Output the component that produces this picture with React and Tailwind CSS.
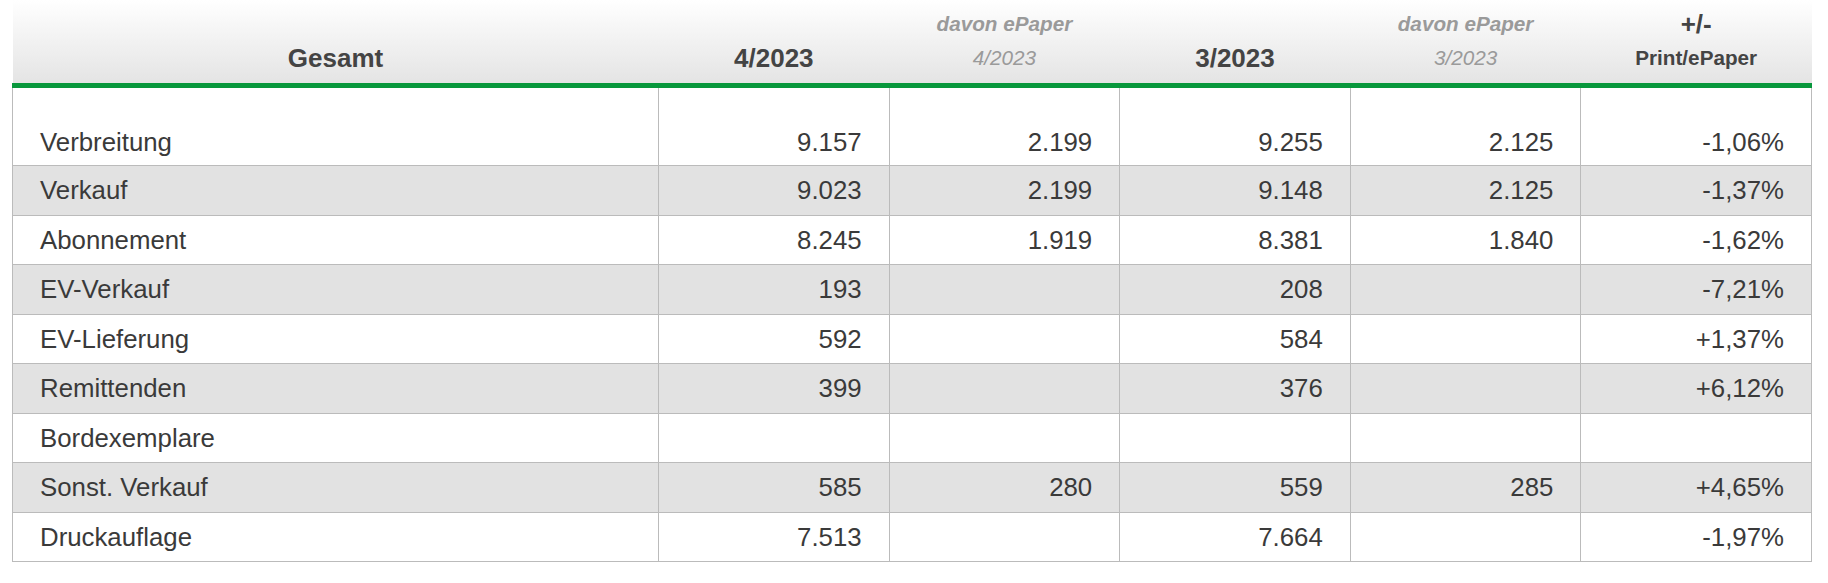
import React from "react";

const rows = [
  ["Verbreitung", "9.157", "2.199", "9.255", "2.125", "-1,06%"],
  ["Verkauf", "9.023", "2.199", "9.148", "2.125", "-1,37%"],
  ["Abonnement", "8.245", "1.919", "8.381", "1.840", "-1,62%"],
  ["EV-Verkauf", "193", "", "208", "", "-7,21%"],
  ["EV-Lieferung", "592", "", "584", "", "+1,37%"],
  ["Remittenden", "399", "", "376", "", "+6,12%"],
  ["Bordexemplare", "", "", "", "", ""],
  ["Sonst. Verkauf", "585", "280", "559", "285", "+4,65%"],
  ["Druckauflage", "7.513", "", "7.664", "", "-1,97%"],
];

function HeadCell({ top, bottom, topClass, bottomClass }) {
  return (
    <th className="p-0 font-normal border-b-[5px] border-[#08973c] bg-gradient-to-b from-white to-[#e4e4e4]">
      <div className="h-[83px] flex flex-col items-center justify-end pb-[12px]">
        {top ? (
          <div className={"leading-[24px] mb-[9px] " + topClass}>{top}</div>
        ) : null}
        <div className={"leading-[26px] " + bottomClass}>{bottom}</div>
      </div>
    </th>
  );
}

export default function App() {
  const bold = "text-[26px] font-bold text-[#444]";
  const grayTop = "text-[20.7px] font-bold italic text-[#9a9a9a]";
  const grayBottom = "text-[20.7px] italic text-[#9a9a9a]";
  return (
    <div className="bg-white w-[1828px] h-[583px] pl-[12px] font-['Liberation_Sans',Arial,sans-serif]">
      <table className="w-[1800px] table-fixed border-collapse">
        <colgroup>
          <col className="w-[646px]" />
          <col />
          <col />
          <col />
          <col />
          <col />
        </colgroup>
        <thead>
          <tr>
            <HeadCell bottom="Gesamt" bottomClass={bold} />
            <HeadCell bottom="4/2023" bottomClass={bold} />
            <HeadCell top="davon ePaper" topClass={grayTop} bottom="4/2023" bottomClass={grayBottom} />
            <HeadCell bottom="3/2023" bottomClass={bold} />
            <HeadCell top="davon ePaper" topClass={grayTop} bottom="3/2023" bottomClass={grayBottom} />
            <HeadCell
              top="+/-"
              topClass="text-[26px] font-bold text-[#444]"
              bottom="Print/ePaper"
              bottomClass="text-[20.7px] font-bold text-[#444]"
            />
          </tr>
        </thead>
        <tbody className="text-[25.8px] text-[#3a3a3a]">
          {rows.map((r, i) => {
            const bg = i % 2 === 1 ? "bg-[#e2e2e2]" : "bg-white";
            const first = i === 0;
            const h = first ? "h-[80px] pt-[30px]" : "h-[49.5px]";
            return (
              <tr key={i} className={bg}>
                {r.map((c, j) => (
                  <td
                    key={j}
                    className={
                      "border border-[#bbbbbb] leading-[30px] align-middle " +
                      h +
                      (j === 0 ? " text-left pl-[27px]" : " text-right pr-[27px]")
                    }
                  >
                    {c}
                  </td>
                ))}
              </tr>
            );
          })}
        </tbody>
      </table>
    </div>
  );
}
